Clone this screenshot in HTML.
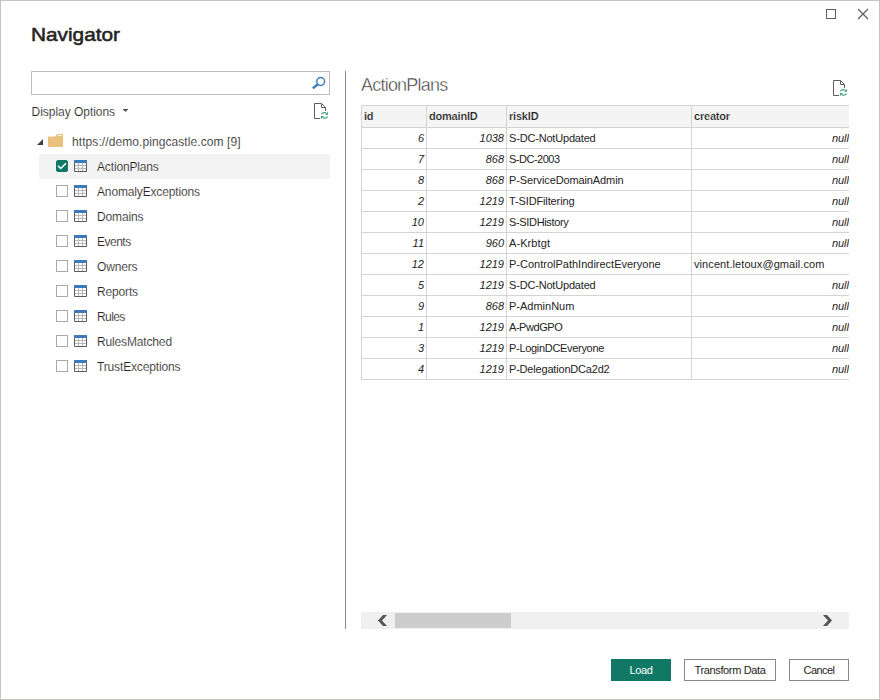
<!DOCTYPE html>
<html lang="en">
<head>
<meta charset="utf-8">
<title>Navigator</title>
<style>
*{box-sizing:border-box;margin:0;padding:0}
html,body{width:880px;height:700px;overflow:hidden;background:#fff}
body{font-family:"Liberation Sans",sans-serif;color:#252423;font-size:12px;position:relative}
.win{position:absolute;left:0;top:0;width:880px;height:700px;background:#fff}
#frame{position:absolute;left:0;top:0;width:880px;height:700px;border:1px solid #c6c4c2;pointer-events:none}
.t{position:absolute;white-space:nowrap;line-height:1;-webkit-text-stroke:0.15px #fff}
.ico{position:absolute;overflow:visible}
#title{left:31px;top:24.6px;font-size:19px;color:#252423;-webkit-text-stroke:0.55px #252423;transform:scaleX(1.095);transform-origin:0 0}
#search{position:absolute;left:31px;top:71px;width:299px;height:24px;border:1px solid #bebebe;background:#fff}
#dopt{left:31.5px;top:106px;font-size:12px;letter-spacing:-0.03px}
.row{position:absolute;left:39px;width:291px;height:25px;background:#f3f3f3}
.cb{position:absolute;left:56px;width:12px;height:12px;border:1px solid #a9a9a9;background:#fff}
.cb.on{background:#117865;border-color:#117865;border-radius:2px}
.lbl{left:97px;font-size:12px;letter-spacing:-0.15px}
#divider{position:absolute;left:345px;top:71px;width:1px;height:558px;background:#898887}
#ptitle{left:361px;top:76px;font-size:18px;color:#333;letter-spacing:-0.78px;-webkit-text-stroke:0.45px #fff}
#tblwrap{position:absolute;left:361px;top:105px;width:488px;height:275px;overflow:hidden}
table{border-collapse:collapse;table-layout:fixed;width:490px;font-size:11px}
td,th{border:1px solid #d4d4d4;height:21px;padding:0 2px;overflow:hidden;white-space:nowrap;line-height:1;vertical-align:middle}
th{background:#f4f4f4;text-align:left;font-weight:bold;height:22px;letter-spacing:-0.2px;-webkit-text-stroke:0.2px #f4f4f4}
td.n{text-align:right;font-style:italic}
#sb{position:absolute;left:361px;top:612px;width:488px;height:17px;background:#f0f0f0}
#thumb{position:absolute;left:34px;top:1px;width:116px;height:15px;background:#cdcdcd}
.btn{position:absolute;top:659px;height:22px;border:1px solid #8a8886;background:#fff;font-size:11px;text-align:center;line-height:20px;color:#252423;white-space:nowrap}
.btn.pri{background:#117865;border-color:#117865;color:#fff}
</style>
</head>
<body>
<div class="win">
  <div id="frame"></div>
  <div id="title" class="t">Navigator</div>
  <svg class="ico" style="left:826px;top:9px" width="11" height="11" viewBox="0 0 11 11"><rect x="0.5" y="0.5" width="9" height="9" fill="none" stroke="#605e5c" stroke-width="1"/></svg>
  <svg class="ico" style="left:858px;top:9px" width="11" height="11" viewBox="0 0 11 11"><path d="M0 0 L10 10 M10 0 L0 10" stroke="#605e5c" stroke-width="1.3" fill="none"/></svg>
  <div id="search"></div>
  <svg class="ico" style="left:311px;top:75px" width="16" height="16" viewBox="0 0 16 16"><circle cx="9.7" cy="6.5" r="3.9" fill="none" stroke="#3f7cbb" stroke-width="1.5"/><path d="M6.9 9.3 L1.8 13.4" stroke="#3f7cbb" stroke-width="2.4"/></svg>
  <div id="dopt" class="t">Display Options</div>
  <svg class="ico" style="left:123px;top:109px" width="5" height="3" viewBox="0 0 5 3"><path d="M0 0 H5 V0.4 L2.5 3 L0 0.4 Z" fill="#555"/></svg>
  <svg class="ico" style="left:314px;top:103px" width="16" height="18" viewBox="0 0 16 18"><path d="M6 15.5 H0.5 V0.5 H7.5 L11.5 4.5 V8" fill="none" stroke="#5e5e5e" stroke-width="1"/><path d="M7.5 0.5 V4.5 H11.5" fill="none" stroke="#5e5e5e" stroke-width="1"/><path d="M7.3 11.2 Q9.2 9 12 9.9 M13.7 13.6 Q11.8 15.8 9 14.9" fill="none" stroke="#3f9b7b" stroke-width="1.2"/><path d="M14 8.8 V11.8 H11 Z M7 16 V13 H10 Z" fill="#3f9b7b"/></svg>
  <svg class="ico" style="left:37px;top:139px" width="6" height="6" viewBox="0 0 6 6"><path d="M6 0 V6 H0 Z" fill="#404040"/></svg>
  <svg class="ico" style="left:48px;top:134px" width="15" height="13" viewBox="0 0 15 13"><path d="M0 2.4 H7.3 L8.8 0 H15 V13 H0 Z" fill="#e8c27e"/><path d="M9.9 0.9 H14 V1.7 H9.4 Z" fill="#fff"/></svg>
  <div class="t" style="left:72px;top:136px;font-size:12px;letter-spacing:0.08px">https://demo.pingcastle.com [9]</div>
  <div class="row" style="top:154px"></div>
  <div class="cb on" style="top:160px"></div><svg class="ico" style="left:56px;top:160px" width="12" height="12" viewBox="0 0 12 12"><path d="M2 5.8 L4.7 8.5 L10 3.2" fill="none" stroke="#fff" stroke-width="1.5"/></svg>
  <svg class="ico" style="left:74px;top:160px" width="13" height="12" viewBox="0 0 13 12"><rect x="0" y="0" width="13" height="3" fill="#3d7aba"/><path d="M1 5.5 H12 M1 8.5 H12 M4.5 3 V11 M8.5 3 V11" fill="none" stroke="#b8b8b8" stroke-width="1"/><path d="M0.5 3 V11.5 H12.5 V3" fill="none" stroke="#5c5c5c" stroke-width="1"/></svg>
  <div class="t lbl" style="top:161px">ActionPlans</div>
  <div class="cb" style="top:185px"></div>
  <svg class="ico" style="left:74px;top:185px" width="13" height="12" viewBox="0 0 13 12"><rect x="0" y="0" width="13" height="3" fill="#3d7aba"/><path d="M1 5.5 H12 M1 8.5 H12 M4.5 3 V11 M8.5 3 V11" fill="none" stroke="#b8b8b8" stroke-width="1"/><path d="M0.5 3 V11.5 H12.5 V3" fill="none" stroke="#5c5c5c" stroke-width="1"/></svg>
  <div class="t lbl" style="top:186px">AnomalyExceptions</div>
  <div class="cb" style="top:210px"></div>
  <svg class="ico" style="left:74px;top:210px" width="13" height="12" viewBox="0 0 13 12"><rect x="0" y="0" width="13" height="3" fill="#3d7aba"/><path d="M1 5.5 H12 M1 8.5 H12 M4.5 3 V11 M8.5 3 V11" fill="none" stroke="#b8b8b8" stroke-width="1"/><path d="M0.5 3 V11.5 H12.5 V3" fill="none" stroke="#5c5c5c" stroke-width="1"/></svg>
  <div class="t lbl" style="top:211px">Domains</div>
  <div class="cb" style="top:235px"></div>
  <svg class="ico" style="left:74px;top:235px" width="13" height="12" viewBox="0 0 13 12"><rect x="0" y="0" width="13" height="3" fill="#3d7aba"/><path d="M1 5.5 H12 M1 8.5 H12 M4.5 3 V11 M8.5 3 V11" fill="none" stroke="#b8b8b8" stroke-width="1"/><path d="M0.5 3 V11.5 H12.5 V3" fill="none" stroke="#5c5c5c" stroke-width="1"/></svg>
  <div class="t lbl" style="top:236px;letter-spacing:-0.5px">Events</div>
  <div class="cb" style="top:260px"></div>
  <svg class="ico" style="left:74px;top:260px" width="13" height="12" viewBox="0 0 13 12"><rect x="0" y="0" width="13" height="3" fill="#3d7aba"/><path d="M1 5.5 H12 M1 8.5 H12 M4.5 3 V11 M8.5 3 V11" fill="none" stroke="#b8b8b8" stroke-width="1"/><path d="M0.5 3 V11.5 H12.5 V3" fill="none" stroke="#5c5c5c" stroke-width="1"/></svg>
  <div class="t lbl" style="top:261px">Owners</div>
  <div class="cb" style="top:285px"></div>
  <svg class="ico" style="left:74px;top:285px" width="13" height="12" viewBox="0 0 13 12"><rect x="0" y="0" width="13" height="3" fill="#3d7aba"/><path d="M1 5.5 H12 M1 8.5 H12 M4.5 3 V11 M8.5 3 V11" fill="none" stroke="#b8b8b8" stroke-width="1"/><path d="M0.5 3 V11.5 H12.5 V3" fill="none" stroke="#5c5c5c" stroke-width="1"/></svg>
  <div class="t lbl" style="top:286px">Reports</div>
  <div class="cb" style="top:310px"></div>
  <svg class="ico" style="left:74px;top:310px" width="13" height="12" viewBox="0 0 13 12"><rect x="0" y="0" width="13" height="3" fill="#3d7aba"/><path d="M1 5.5 H12 M1 8.5 H12 M4.5 3 V11 M8.5 3 V11" fill="none" stroke="#b8b8b8" stroke-width="1"/><path d="M0.5 3 V11.5 H12.5 V3" fill="none" stroke="#5c5c5c" stroke-width="1"/></svg>
  <div class="t lbl" style="top:311px;letter-spacing:-0.6px">Rules</div>
  <div class="cb" style="top:335px"></div>
  <svg class="ico" style="left:74px;top:335px" width="13" height="12" viewBox="0 0 13 12"><rect x="0" y="0" width="13" height="3" fill="#3d7aba"/><path d="M1 5.5 H12 M1 8.5 H12 M4.5 3 V11 M8.5 3 V11" fill="none" stroke="#b8b8b8" stroke-width="1"/><path d="M0.5 3 V11.5 H12.5 V3" fill="none" stroke="#5c5c5c" stroke-width="1"/></svg>
  <div class="t lbl" style="top:336px">RulesMatched</div>
  <div class="cb" style="top:360px"></div>
  <svg class="ico" style="left:74px;top:360px" width="13" height="12" viewBox="0 0 13 12"><rect x="0" y="0" width="13" height="3" fill="#3d7aba"/><path d="M1 5.5 H12 M1 8.5 H12 M4.5 3 V11 M8.5 3 V11" fill="none" stroke="#b8b8b8" stroke-width="1"/><path d="M0.5 3 V11.5 H12.5 V3" fill="none" stroke="#5c5c5c" stroke-width="1"/></svg>
  <div class="t lbl" style="top:361px">TrustExceptions</div>
  <div id="divider"></div>
  <div id="ptitle" class="t">ActionPlans</div>
  <svg class="ico" style="left:833px;top:80px" width="16" height="18" viewBox="0 0 16 18"><path d="M6 15.5 H0.5 V0.5 H7.5 L11.5 4.5 V8" fill="none" stroke="#5e5e5e" stroke-width="1"/><path d="M7.5 0.5 V4.5 H11.5" fill="none" stroke="#5e5e5e" stroke-width="1"/><path d="M7.3 11.2 Q9.2 9 12 9.9 M13.7 13.6 Q11.8 15.8 9 14.9" fill="none" stroke="#3f9b7b" stroke-width="1.2"/><path d="M14 8.8 V11.8 H11 Z M7 16 V13 H10 Z" fill="#3f9b7b"/></svg>
  <div id="tblwrap">
  <table>
    <colgroup><col style="width:65px"><col style="width:80px"><col style="width:185px"><col style="width:160px"></colgroup>
    <tr><th>id</th><th>domainID</th><th>riskID</th><th>creator</th></tr>
    <tr><td class="n">6</td><td class="n">1038</td><td style="letter-spacing:-0.18px">S-DC-NotUpdated</td><td class="n">null</td></tr>
    <tr><td class="n">7</td><td class="n">868</td><td style="letter-spacing:-0.5px">S-DC-2003</td><td class="n">null</td></tr>
    <tr><td class="n">8</td><td class="n">868</td><td style="letter-spacing:-0.115px">P-ServiceDomainAdmin</td><td class="n">null</td></tr>
    <tr><td class="n">2</td><td class="n">1219</td><td style="letter-spacing:-0.13px">T-SIDFiltering</td><td class="n">null</td></tr>
    <tr><td class="n">10</td><td class="n">1219</td><td style="letter-spacing:-0.34px">S-SIDHistory</td><td class="n">null</td></tr>
    <tr><td class="n">11</td><td class="n">960</td><td style="letter-spacing:0.09px">A-Krbtgt</td><td class="n">null</td></tr>
    <tr><td class="n">12</td><td class="n">1219</td><td>P-ControlPathIndirectEveryone</td><td style="letter-spacing:0.08px">vincent.letoux@gmail.com</td></tr>
    <tr><td class="n">5</td><td class="n">1219</td><td style="letter-spacing:-0.18px">S-DC-NotUpdated</td><td class="n">null</td></tr>
    <tr><td class="n">9</td><td class="n">868</td><td>P-AdminNum</td><td class="n">null</td></tr>
    <tr><td class="n">1</td><td class="n">1219</td><td style="letter-spacing:-0.45px">A-PwdGPO</td><td class="n">null</td></tr>
    <tr><td class="n">3</td><td class="n">1219</td><td style="letter-spacing:-0.31px">P-LoginDCEveryone</td><td class="n">null</td></tr>
    <tr><td class="n">4</td><td class="n">1219</td><td style="letter-spacing:-0.19px">P-DelegationDCa2d2</td><td class="n">null</td></tr>
  </table>
  </div>
  <div id="sb">
    <div id="thumb"></div>
    <svg class="ico" style="left:17px;top:3px" width="10" height="11" viewBox="0 0 10 11"><path d="M9 0 H5 L0 5.5 L5 11 H9 L4 5.5 Z" fill="#555"/></svg>
    <svg class="ico" style="left:462px;top:3px" width="10" height="11" viewBox="0 0 10 11"><path d="M0 0 H4 L9 5.5 L4 11 H0 L5 5.5 Z" fill="#555"/></svg>
  </div>
  <div class="btn pri" style="left:611px;width:60px;letter-spacing:-0.4px">Load</div>
  <div class="btn" style="left:684px;width:92px;letter-spacing:-0.35px">Transform Data</div>
  <div class="btn" style="left:789px;width:60px;letter-spacing:-0.55px">Cancel</div>
</div>
</body>
</html>
